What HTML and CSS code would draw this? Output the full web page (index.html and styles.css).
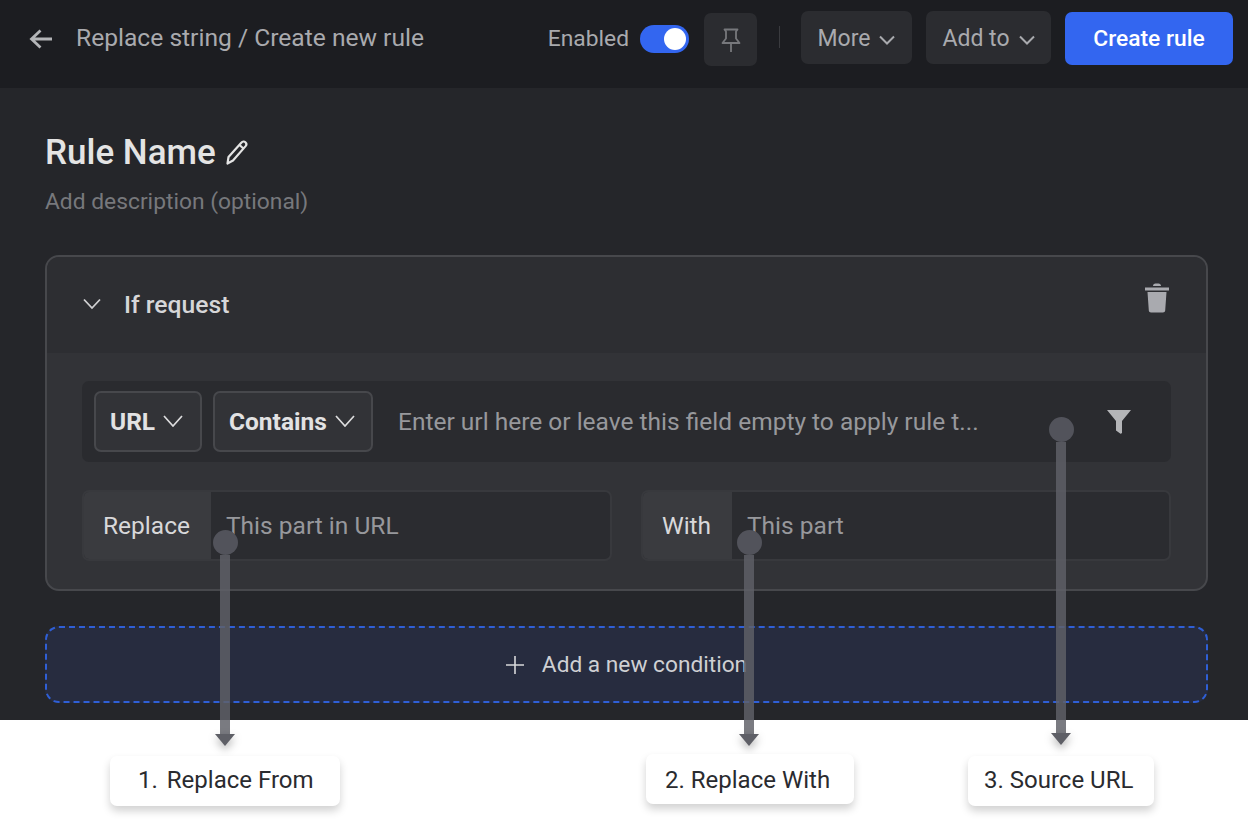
FILE: index.html
```html
<!DOCTYPE html>
<html lang="en">
<head>
<meta charset="utf-8">
<title>Replace string / Create new rule</title>
<link rel="stylesheet" href="styles.css">
</head>
<body>
<div class="page">
  <div class="app">
    <header class="topbar">
      <svg class="back-icon" viewBox="0 0 26 24" width="26" height="24"><path d="M24 12H4M12.500 3.500 3.500 12l9 8.500" fill="none" stroke="#b4b5b8" stroke-width="2.800"/></svg>
      <div class="crumb">Replace string / Create new rule</div>
      <div class="actions">
        <span class="enabled">Enabled</span>
        <span class="toggle"><span class="knob"></span></span>
        <button class="btn pin-btn"><svg viewBox="0 0 20 24" width="20" height="24"><path d="M3.500 1.500h13l-1.500 2V10.500l3.500 4.500H1.500L5 10.500V3.500zM10 15V24" fill="none" stroke="#77787c" stroke-width="1.800" stroke-linejoin="round"/></svg></button>
        <span class="divider"></span>
        <button class="btn more-btn">More<svg class="chev" viewBox="0 0 16 10" width="16" height="10"><path d="M1 1.500 8 8.500l7-7" fill="none" stroke="#a9aaae" stroke-width="2"/></svg></button>
        <button class="btn add-btn">Add to<svg class="chev" viewBox="0 0 16 10" width="16" height="10"><path d="M1 1.500 8 8.500l7-7" fill="none" stroke="#a9aaae" stroke-width="2"/></svg></button>
        <button class="btn create-btn">Create rule</button>
      </div>
    </header>
    <main class="content">
      <div class="title-row">
        <h1 class="rule-name">Rule Name</h1>
        <svg class="pencil" viewBox="0 0 24 26" width="24" height="26"><path d="M2.500 23.500l1-6.500L16.500 2.500c1-1.200 2.800-1.300 3.900-.3s1.200 2.700.2 3.900L8 20.500z M14.500 5l4.500 4" fill="none" stroke="#e4e4e4" stroke-width="2.200" stroke-linejoin="round"/></svg>
      </div>
      <p class="description">Add description (optional)</p>
      <section class="card">
        <div class="card-head">
          <svg class="card-chev" viewBox="0 0 20 12" width="20" height="12"><path d="M2 1.500 10 10l8-8.500" fill="none" stroke="#d0d0d2" stroke-width="1.800"/></svg>
          <span class="card-title">If request</span>
          <svg class="trash" viewBox="0 0 26 32" width="26" height="32"><path d="M1 5.500h24V8.500H1z M9 4c0-1.500 1-2.500 2.500-2.500h3C16 1.500 17 2.500 17 4z M3.500 10h19l-1.300 18.500c-.1 1.200-1 2-2.200 2H7c-1.200 0-2.100-.8-2.200-2z" fill="#a9aaaf"/></svg>
        </div>
        <div class="card-body">
          <div class="url-row">
            <span class="chip chip-url">URL<svg viewBox="0 0 20 12" width="20" height="12"><path d="M1 1 10 11l9-10" fill="none" stroke="#dcdcdd" stroke-width="1.700"/></svg></span>
            <span class="chip chip-contains">Contains<svg viewBox="0 0 20 12" width="20" height="12"><path d="M1 1 10 11l9-10" fill="none" stroke="#dcdcdd" stroke-width="1.700"/></svg></span>
            <span class="url-placeholder">Enter url here or leave this field empty to apply rule t...</span>
            <svg class="filter" viewBox="0 0 26 26" width="26" height="26"><path d="M1 1h24l-9 11v11.500c0 1-1 1.500-1.800 1L10 21.500V12z" fill="#b4b5b8"/></svg>
          </div>
          <div class="replace-grid">
            <div class="field">
              <span class="field-label label-replace">Replace</span>
              <span class="field-input">This part in URL</span>
            </div>
            <div class="field">
              <span class="field-label label-with">With</span>
              <span class="field-input input-with">This part</span>
            </div>
          </div>
        </div>
      </section>
      <div class="add-condition">
        <svg viewBox="0 0 18 18" width="18" height="18"><path d="M9 0v18M0 9h18" stroke="#d8d8da" stroke-width="1.600"/></svg>
        <span>Add a new condition</span>
      </div>
    </main>
  </div>
  <div class="pointer pointer-from"><span class="dot"></span><span class="stem"></span><span class="head"></span></div>
  <div class="pointer pointer-with"><span class="dot"></span><span class="stem"></span><span class="head"></span></div>
  <div class="pointer pointer-url"><span class="dot"></span><span class="stem"></span><span class="head"></span></div>
  <div class="callout callout-from"><span class="callout-num">1.</span> Replace From</div>
  <div class="callout callout-with">2. Replace With</div>
  <div class="callout callout-url">3. Source URL</div>
</div>
</body>
</html>
```
FILE: styles.css
```css
* { box-sizing: border-box; }
html, body { margin: 0; padding: 0; background: #fff; }
body { font-family: Roboto, "Liberation Sans", sans-serif; overflow: hidden; }
.page { position: relative; width: 1248px; height: 822px; overflow: hidden; }
.app { height: 720px; background: #25262a; overflow: hidden; }

.topbar { height: 88px; background: #1c1d21; display: flex; align-items: flex-start; padding: 0 15px 0 28px; }
.back-icon { margin-top: 27px; }
.crumb { margin: 24px 0 0 22px; font-size: 24.6px; line-height: 28px; color: #a9aaae; }
.actions { margin-left: auto; display: flex; align-items: flex-start; }
.enabled { margin-top: 25px; font-size: 22.8px; line-height: 28px; color: #a9aaae; }
.toggle { margin: 25px 0 0 11px; width: 49px; height: 28px; background: #3366f0; border-radius: 14px; position: relative; display: block; }
.knob { position: absolute; right: 3px; top: 3px; width: 22px; height: 22px; border-radius: 50%; background: #fff; }
.btn { border: 0; padding: 0; font-family: inherit; font-size: 23px; color: #a9aaae; background: #2b2c30; border-radius: 7px; display: flex; align-items: center; justify-content: center; }
.pin-btn { margin: 13px 0 0 15px; width: 53px; height: 53px; }
.divider { margin: 26px 0 0 22px; width: 1px; height: 22px; background: #3a3b3f; }
.more-btn { margin: 11px 0 0 21px; width: 111px; height: 53px; padding-top: 2px; }
.add-btn { margin: 11px 0 0 14px; width: 125px; height: 53px; padding-top: 2px; }
.chev { margin-left: 9px; margin-top: 2px; }
.create-btn { margin: 12px 0 0 14px; width: 168px; height: 53px; background: #3366f0; color: #fff; font-weight: 500; font-size: 22.8px; }

.content { padding: 0 40px 0 45px; }
.title-row { display: flex; align-items: center; height: 44px; margin-top: 43px; }
.rule-name { margin: 0; font-size: 35px; line-height: 44px; font-weight: 500; color: #e4e4e4; }
.pencil { margin: 0 0 0 9px; }
.description { margin: 13px 0 0; font-size: 22.8px; line-height: 27px; color: #77787c; }
.card { margin-top: 40px; height: 336px; border: 2px solid #47484c; border-radius: 14px; background: #323337; overflow: hidden; }
.card-head { height: 96px; background: #2d2e32; display: flex; align-items: center; padding: 0 36px 2px 35px; }
.card-title { margin-left: 22px; font-size: 24.7px; font-weight: 500; color: #d6d6d8; }
.trash { margin: -12px 0 0 auto; }
.card-body { padding: 28px 35px 0; }
.url-row { height: 81px; background: #2a2b2f; border-radius: 7px; display: flex; align-items: center; padding: 0 39px 0 12px; }
.chip { height: 61px; border: 2px solid #47484c; border-radius: 7px; background: #323337; display: flex; align-items: center; font-size: 24.5px; font-weight: 700; color: #e2e2e3; padding-left: 14px; }
.chip svg { margin-left: 8px; margin-top: -2px; }
.chip-url { width: 108px; }
.chip-contains { width: 160px; margin-left: 11px; }
.url-placeholder { margin-left: 25px; font-size: 24.5px; color: #97989c; }
.filter { margin-left: auto; }
.replace-grid { margin-top: 28px; display: grid; grid-template-columns: 530px 530px; gap: 29px; }
.field { height: 71px; border: 2px solid #38393d; border-radius: 7px; background: #2b2c30; display: flex; align-items: center; overflow: hidden; }
.field-label { height: 100%; display: flex; align-items: center; justify-content: center; background: #3a3b3f; color: #d8d8da; font-size: 24.5px; padding-right: 2px; }
.label-replace { width: 127px; }
.label-with { width: 89px; }
.field-input { margin-left: 15px; font-size: 24.5px; color: #97989c; }
.add-condition { margin-top: 35px; height: 77px; border: 2px dashed #2f5fd6; border-radius: 14px; background: #272c3f; display: flex; align-items: center; justify-content: center; gap: 18px; font-size: 22.7px; color: #cfd0d3; }

.pointer { position: absolute; width: 25px; }
.dot { position: absolute; left: 0; top: 0; width: 25px; height: 25px; border-radius: 50%; background: #52535b; }
.stem { position: absolute; left: 7px; top: 25px; bottom: 12px; width: 10px; background: rgba(95, 96, 104, .83); }
.head { position: absolute; left: 2px; bottom: 0; width: 0; height: 0; border-left: 10.5px solid transparent; border-right: 10.5px solid transparent; border-top: 12px solid #5e5f66; filter: drop-shadow(0 4px 4px rgba(0, 0, 0, .3)); }
.pointer-from { left: 213px; top: 530px; height: 216px; }
.pointer-with { left: 737px; top: 530px; height: 216px; }
.pointer-url { left: 1049px; top: 417px; height: 328px; }

.callout { position: absolute; height: 50px; background: #fff; border-radius: 7px; box-shadow: 0 5px 8px rgba(0, 0, 0, .18); display: flex; align-items: center; gap: 9px; font-size: 24px; color: #2a2b2f; }
.callout-from { left: 110px; top: 756px; width: 230px; padding: 0 0 2px 28px; }
.callout-with { left: 646px; top: 754px; width: 208px; padding: 2px 0 0 19px; }
.callout-url { left: 968px; top: 756px; width: 186px; padding: 0 0 2px 16px; }
```
